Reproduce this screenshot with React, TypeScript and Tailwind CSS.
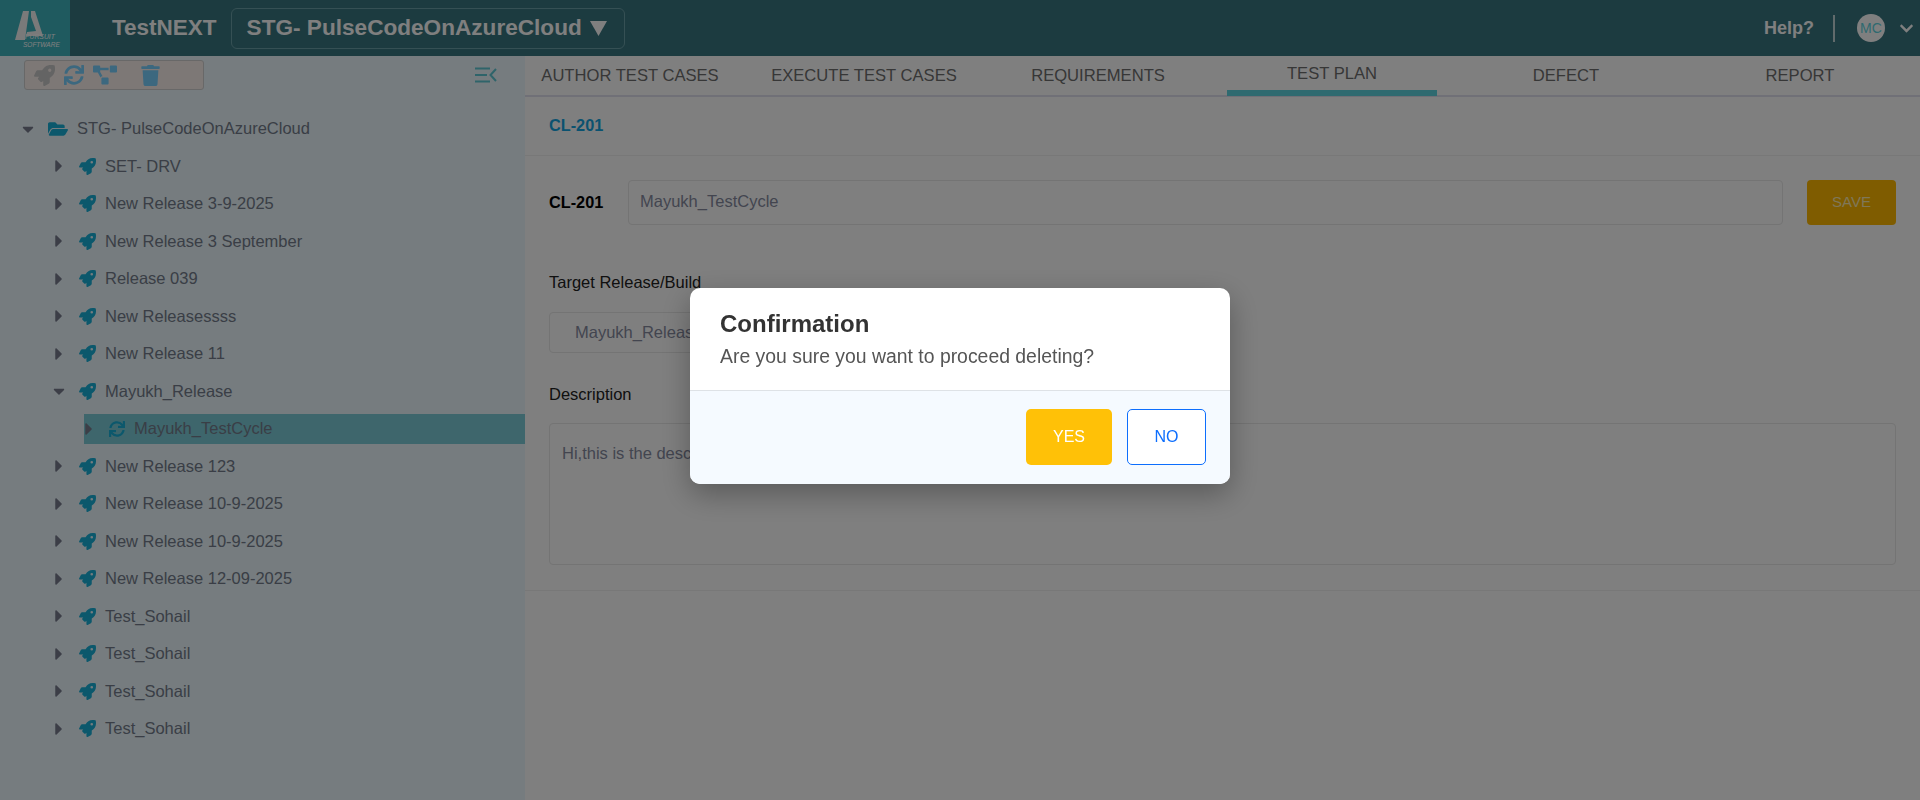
import { FaCaretDown, FaCaretRight, FaChevronDown, FaFolderOpen, FaProjectDiagram, FaRocket, FaSync, FaTrash } from "react-icons/fa";

const tabs = ["AUTHOR TEST CASES", "EXECUTE TEST CASES", "REQUIREMENTS", "TEST PLAN", "DEFECT", "REPORT"];

const releasesTop = [
  "SET- DRV",
  "New Release 3-9-2025",
  "New Release 3 September",
  "Release 039",
  "New Releasessss",
  "New Release 11",
];

const releasesBottom = [
  "New Release 123",
  "New Release 10-9-2025",
  "New Release 10-9-2025",
  "New Release 12-09-2025",
  "Test_Sohail",
  "Test_Sohail",
  "Test_Sohail",
  "Test_Sohail",
];

const ReleaseRow = ({ name, open }: { name: string; open?: boolean }) => (
  <div className="flex h-[37.5px] items-center pl-[51px]">
    <span className="flex w-[16px] justify-center text-[#787d8e]">
      {open ? <FaCaretDown size={18} /> : <FaCaretRight size={20} />}
    </span>
    <FaRocket size={17} className="ml-[12px] text-[#18b0d8]" />
    <span className="ml-[9px] text-[16.5px] text-[#747d8c]">{name}</span>
  </div>
);

const Logo = () => (
  <div className="flex h-full w-[70px] shrink-0 flex-col bg-[#3eb4be] pl-[14px] pt-[10px]">
    <svg width="32" height="32" viewBox="0 0 32 32" className="shrink-0">
      <path d="M1 30 L9 1 L15 1 L11 30 Z M17 1 L21 1 L29 26 L12 26 L13 22 L22 21 L17 7 Z" fill="#f4f4f4" />
    </svg>
    <div className="-mt-[9px] ml-[11px] text-[6.8px] italic leading-[8px] text-white">PURSUIT</div>
    <div className="ml-[9px] whitespace-nowrap text-[6.5px] italic leading-[8px] text-white">SOFTWARE</div>
  </div>
);

export default function App() {
  return (
    <div className="flex h-screen flex-col overflow-hidden bg-white font-['Liberation_Sans',Arial,sans-serif]">
      <header className="flex h-[56px] shrink-0 items-center bg-[#387680]">
        <Logo />
        <span className="ml-[42px] text-[22.5px] font-bold text-white">TestNEXT</span>
        <div className="ml-[14px] flex h-[41px] w-[394px] items-center rounded-[6px] border border-[#6ba0a8] pl-[15px] text-[22.6px] font-bold text-white">
          STG- PulseCodeOnAzureCloud
          <svg width="17" height="17" viewBox="0 0 17 17" className="ml-[8px]">
            <path d="M0 1 H17 L8.5 16 Z" fill="#fff" />
          </svg>
        </div>
        <div className="ml-auto flex items-center">
          <span className="text-[18px] font-bold text-white">Help?</span>
          <span className="ml-[19px] h-[27px] w-[2px] bg-white/70" />
          <span className="ml-[22px] flex h-[28px] w-[28px] items-center justify-center rounded-full bg-white text-[14px] text-[#5ed4e0]">
            MC
          </span>
          <FaChevronDown size={15} className="ml-[14px] mr-[6px] text-white" />
        </div>
      </header>

      <div className="flex min-h-0 flex-1">
        <aside className="w-[525px] shrink-0 bg-[#ecf8fe] pt-[4px]">
          <div className="flex items-center justify-between pl-[24px] pr-[28px]">
            <div className="flex h-[30px] w-[180px] items-center rounded-[3px] border border-[#d0d0d0] bg-[#fbf0ec] pl-[9px]">
              <FaRocket size={21} className="text-[#c8c8c8]" />
              <FaSync size={20} className="ml-[9px] text-[#78d0ff]" />
              <FaProjectDiagram size={24} className="ml-[9px] text-[#78d0ff]" />
              <FaTrash size={21} className="ml-[23px] text-[#78d0ff]" />
            </div>
            <svg width="22" height="16" viewBox="0 0 22 16" fill="none" stroke="#5ec8d4" strokeWidth="2">
              <path d="M0 1.5 H15 M0 8 H12 M0 14.5 H15 M21 2 L15.5 8 L21 14" />
            </svg>
          </div>

          <div className="mt-[20px]">
            <div className="flex h-[37.5px] items-center pl-[20px]">
              <span className="flex w-[16px] justify-center text-[#787d8e]">
                <FaCaretDown size={18} />
              </span>
              <FaFolderOpen size={20} className="ml-[12px] text-[#18b0d8]" />
              <span className="ml-[9px] text-[16.5px] text-[#747d8c]">STG- PulseCodeOnAzureCloud</span>
            </div>
            {releasesTop.map((name) => (
              <ReleaseRow key={name} name={name} />
            ))}
            <ReleaseRow name="Mayukh_Release" open />
            <div className="flex h-[37.5px] items-center pl-[84px]">
              <div className="flex h-[30px] flex-1 items-center bg-[#7cccd8]">
                <FaCaretRight size={20} className="-ml-[5px] text-[#787d8e]" />
                <FaSync size={16} className="ml-[10px] text-[#18b0d8]" />
                <span className="ml-[9px] text-[16.5px] text-[#747d8c]">Mayukh_TestCycle</span>
              </div>
            </div>
            {releasesBottom.map((name, i) => (
              <ReleaseRow key={name + i} name={name} />
            ))}
          </div>
        </aside>

        <main className="min-w-0 flex-1 bg-white">
          <div className="h-[41px] border-b-2 border-[#e0e0ee]">
            <div className="-ml-[12px] grid h-[40px] w-[1404px] grid-cols-6">
              {tabs.map((tab) =>
                tab === "TEST PLAN" ? (
                  <div key={tab} className="flex flex-col items-center">
                    <span className="flex h-[34px] items-center pt-[2px] text-[16.6px] text-[#6e6e6e]">{tab}</span>
                    <span className="h-[6px] w-[210px] bg-[#5ed4e0]" />
                  </div>
                ) : (
                  <div key={tab} className="flex h-[40px] items-center justify-center pt-[1px] text-[16.6px] text-[#6e6e6e]">
                    {tab}
                  </div>
                ),
              )}
            </div>
          </div>

          <div className="flex h-[59px] items-center border-b border-[#f0f0f0] pb-[2px] pl-[24px] text-[16.3px] font-bold text-[#14a5e0]">
            CL-201
          </div>

          <div className="mt-[24px] flex items-center pl-[24px] pr-[24px]">
            <span className="w-[79px] text-[16.3px] font-bold text-black">CL-201</span>
            <div className="flex h-[45px] flex-1 items-center rounded-[4px] border border-[#e8e8e8] pb-[2px] pl-[11px] text-[16.5px] text-[#868b9f]">
              Mayukh_TestCycle
            </div>
            <button className="ml-[24px] h-[45px] w-[89px] rounded-[4px] bg-[#ffb800] text-[15px] text-[#ffeeb0]">
              SAVE
            </button>
          </div>

          <div className="mt-[45px] pl-[24px] text-[16.5px] text-[#222]">Target Release/Build</div>
          <div className="ml-[24px] mt-[17px] flex h-[41px] w-[500px] items-center rounded-[4px] border border-[#e8e8e8] pl-[25px] text-[16.5px] text-[#868b9f]">
            Mayukh_Release
          </div>

          <div className="mt-[29px] pl-[24px] text-[16.5px] text-[#222]">Description</div>
          <div className="mx-[24px] mt-[16px] h-[142px] rounded-[4px] border border-[#e8e8e8] pl-[12px] pt-[17px] text-[16.5px] text-[#868b9f]">
            Hi,this is the description
          </div>
          <div className="mt-[25px] border-t border-[#f0f0f0]" />
        </main>
      </div>

      <div className="fixed inset-0 flex justify-center bg-black/50 pt-[288px]">
        <div className="h-[196px] w-[540px] overflow-hidden rounded-[10px] bg-white shadow-[0_10px_30px_rgba(0,0,0,0.3)]">
          <div className="h-[103px] border-b border-[#dee2e6] pl-[30px] pt-[21px]">
            <div className="text-[24px] font-bold leading-[30px] text-[#333]">Confirmation</div>
            <div className="mt-[3px] text-[19.4px] leading-[28px] text-[#555]">Are you sure you want to proceed deleting?</div>
          </div>
          <div className="flex h-[93px] items-start justify-end gap-[15px] bg-[#f5faff] pr-[24px] pt-[18px]">
            <button className="h-[56px] w-[86px] rounded-[5px] bg-[#ffc107] text-[16px] text-white">YES</button>
            <button className="h-[56px] w-[79px] rounded-[5px] border border-[#0d6efd] bg-white text-[16px] text-[#0d6efd]">
              NO
            </button>
          </div>
        </div>
      </div>
    </div>
  );
}
